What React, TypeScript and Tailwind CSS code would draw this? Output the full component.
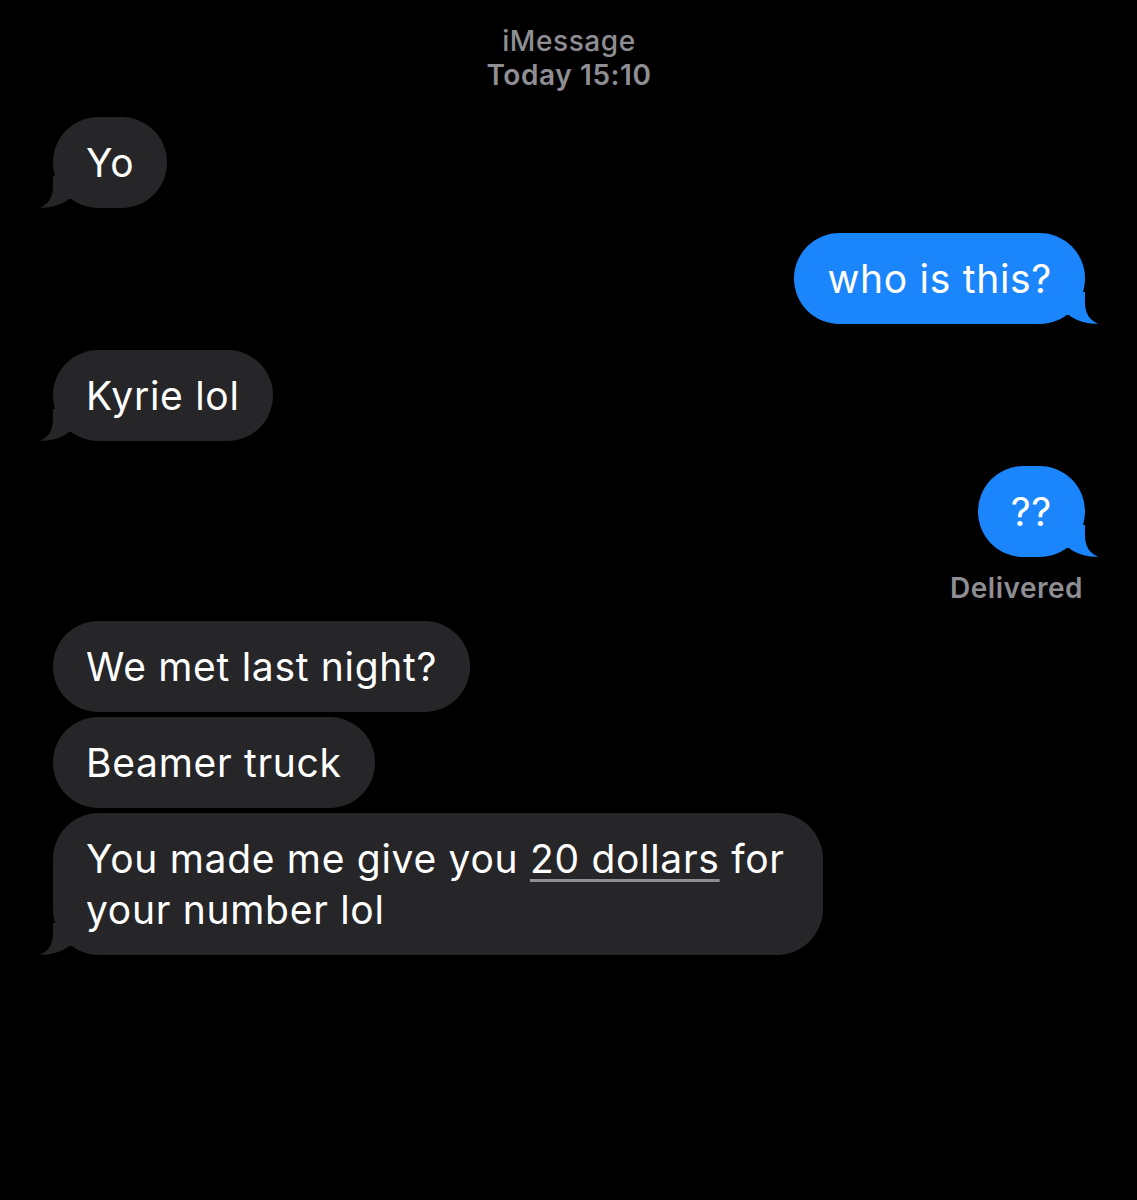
import React from "react";

type Side = "in" | "out";

const TailIn = () => (
	<svg
		className="absolute bottom-0 left-[-15px]"
		width="40"
		height="32"
		viewBox="0 0 40 32"
	>
		<path
			d="M15 0 L15 10 C15 22 10 28.5 2 31.5 C12 32.5 24 29 31 23 L40 23 L40 0 Z"
			fill="#262629"
		/>
	</svg>
);

const TailOut = () => (
	<svg
		className="absolute bottom-0 right-[-15px]"
		width="40"
		height="32"
		viewBox="0 0 40 32"
	>
		<path
			d="M25 0 L25 10 C25 22 30 28.5 38 31.5 C28 32.5 16 29 9 23 L0 23 L0 0 Z"
			fill="#1b86fc"
		/>
	</svg>
);

const Bubble = ({
	side,
	tail = false,
	className = "",
	children,
}: {
	side: Side;
	tail?: boolean;
	className?: string;
	children: React.ReactNode;
}) => {
	const isOut = side === "out";
	return (
		<div className={`flex ${isOut ? "justify-end" : "justify-start"}`}>
			<div
				className={`relative rounded-[46px] px-[33px] py-[20px] text-[39px] leading-[51px] tracking-[0.7px] text-white ${
					isOut ? "bg-[#1b86fc]" : "bg-[#262629]"
				} ${className}`}
			>
				{tail && (isOut ? <TailOut /> : <TailIn />)}
				<span className="relative">{children}</span>
			</div>
		</div>
	);
};

export default function App() {
	return (
		<div
			className="min-h-[1200px] w-full bg-black pl-[53px] pr-[52px] pt-[24px]"
			style={{ fontFamily: "Inter, 'Noto Sans', sans-serif" }}
		>
			<div className="text-center text-[28px] leading-[34px] tracking-[0.6px] text-[#8e8e93]">
				<div className="font-medium">iMessage</div>
				<div className="font-semibold">Today 15:10</div>
			</div>

			<div className="mt-[25px] flex flex-col">
				<Bubble side="in" tail>
					Yo
				</Bubble>
				<div className="mt-[25px]">
					<Bubble side="out" tail>
						who is this?
					</Bubble>
				</div>
				<div className="mt-[26px]">
					<Bubble side="in" tail>
						Kyrie lol
					</Bubble>
				</div>
				<div className="mt-[25px]">
					<Bubble side="out" tail>
						??
					</Bubble>
				</div>
				<div className="mt-[15px] pr-[2px] text-right text-[28px] font-semibold leading-[32px] tracking-[0.5px] text-[#8e8e93]">
					Delivered
				</div>
				<div className="mt-[17px] flex flex-col gap-[5px]">
					<Bubble side="in">We met last night?</Bubble>
					<Bubble side="in">Beamer truck</Bubble>
					<Bubble side="in" tail className="w-[770px] rounded-[42px]">
						You made me give you{" "}
						<span className="underline decoration-[#8e8e93] decoration-[3px] underline-offset-[6px]">
							20 dollars
						</span>{" "}
						for
						<br />
						your number lol
					</Bubble>
				</div>
			</div>
		</div>
	);
}
